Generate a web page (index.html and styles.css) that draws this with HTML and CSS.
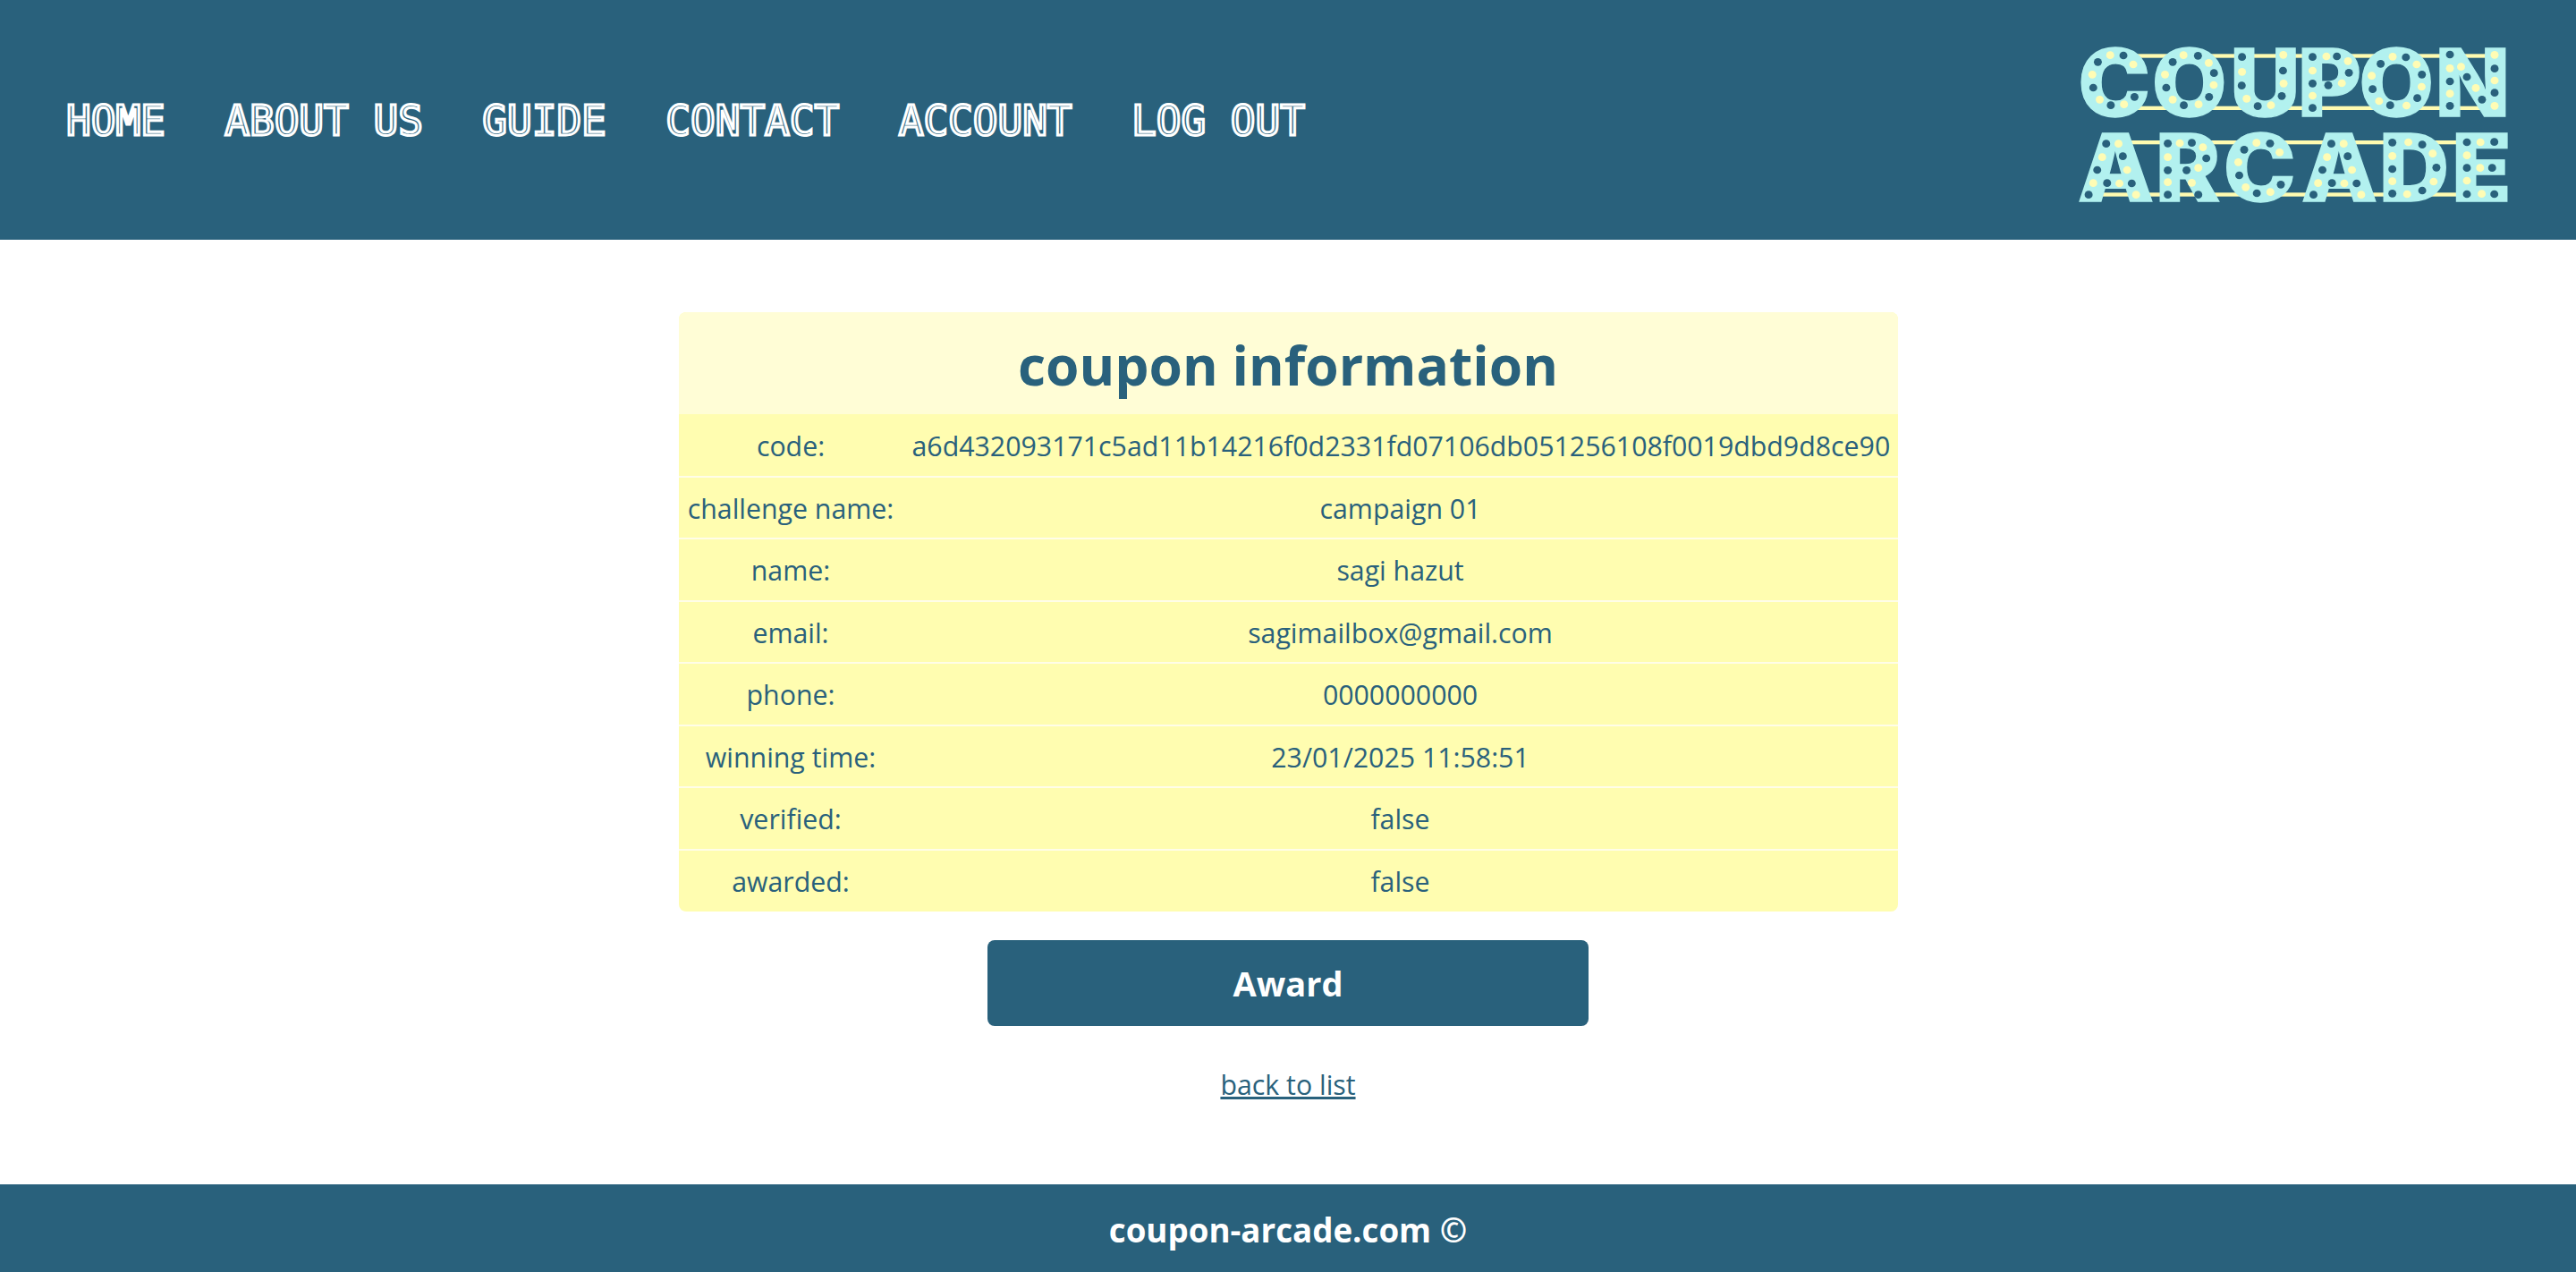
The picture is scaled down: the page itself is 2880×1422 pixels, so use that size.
FILE: index.html
```html
<!DOCTYPE html>
<html lang="en">
<head>
    <meta charset="UTF-8">
    <title>coupon information</title>
    <link rel="stylesheet" href="styles.css">
</head>
<body>
    <header class="top">
        <nav class="menu">
            <a href="#">HOME</a>
            <a href="#">ABOUT US</a>
            <a href="#">GUIDE</a>
            <a href="#">CONTACT</a>
            <a href="#">ACCOUNT</a>
            <a href="#">LOG OUT</a>
        </nav>
        <svg class="logo" viewBox="0 0 1568 660" preserveAspectRatio="none">
            <g class="rails">
                <rect x="310" y="91" width="1140" height="13"/>
                <rect x="310" y="266" width="1140" height="13"/>
                <rect x="290" y="381" width="1080" height="13"/>
                <rect x="195" y="556" width="1175" height="13"/>
            </g>
            <text class="logo-text" x="126 366 620 840 1038 1286" y="301">COUPON</text>
            <text class="logo-text" x="124 378 598 850 1104 1340" y="586">ARCADE</text>
            <g class="dark">
                <circle cx="273" cy="96" r="13"/><circle cx="190" cy="118" r="13"/><circle cx="175" cy="204" r="13"/><circle cx="232" cy="263" r="13"/><circle cx="309" cy="235" r="13"/>
                <circle cx="515" cy="97" r="13"/><circle cx="433" cy="118" r="13"/><circle cx="567" cy="155" r="13"/><circle cx="412" cy="204" r="13"/><circle cx="551" cy="235" r="13"/><circle cx="469" cy="263" r="13"/>
                <circle cx="658" cy="101" r="13"/><circle cx="791" cy="147" r="13"/><circle cx="657" cy="197" r="13"/><circle cx="787" cy="232" r="13"/><circle cx="709" cy="266" r="13"/>
                <circle cx="887" cy="101" r="13"/><circle cx="966" cy="99" r="13"/><circle cx="1005" cy="154" r="13"/><circle cx="887" cy="190" r="13"/><circle cx="938" cy="196" r="13"/><circle cx="887" cy="272" r="13"/>
                <circle cx="1190" cy="102" r="13"/><circle cx="1108" cy="124" r="13"/><circle cx="1242" cy="160" r="13"/><circle cx="1082" cy="209" r="13"/><circle cx="1227" cy="239" r="13"/><circle cx="1139" cy="263" r="13"/>
                <circle cx="1333" cy="93" r="13"/><circle cx="1478" cy="140" r="13"/><circle cx="1333" cy="183" r="13"/><circle cx="1388" cy="168" r="13"/><circle cx="1478" cy="221" r="13"/><circle cx="1437" cy="244" r="13"/><circle cx="1333" cy="265" r="13"/>
                <circle cx="217" cy="392" r="13"/><circle cx="271" cy="434" r="13"/><circle cx="188" cy="480" r="13"/><circle cx="220" cy="524" r="13"/><circle cx="300" cy="525" r="13"/><circle cx="160" cy="563" r="13"/>
                <circle cx="417" cy="391" r="13"/><circle cx="495" cy="389" r="13"/><circle cx="542" cy="441" r="13"/><circle cx="417" cy="481" r="13"/><circle cx="478" cy="481" r="13"/><circle cx="417" cy="563" r="13"/><circle cx="516" cy="563" r="13"/>
                <circle cx="749" cy="391" r="13"/><circle cx="665" cy="412" r="13"/><circle cx="649" cy="498" r="13"/><circle cx="706" cy="558" r="13"/><circle cx="784" cy="529" r="13"/>
                <circle cx="948" cy="392" r="13"/><circle cx="1001" cy="434" r="13"/><circle cx="919" cy="480" r="13"/><circle cx="950" cy="524" r="13"/><circle cx="1030" cy="525" r="13"/><circle cx="890" cy="563" r="13"/>
                <circle cx="1146" cy="388" r="13"/><circle cx="1243" cy="395" r="13"/><circle cx="1146" cy="477" r="13"/><circle cx="1289" cy="472" r="13"/><circle cx="1146" cy="559" r="13"/><circle cx="1243" cy="549" r="13"/>
                <circle cx="1388" cy="387" r="13"/><circle cx="1477" cy="386" r="13"/><circle cx="1388" cy="473" r="13"/><circle cx="1470" cy="473" r="13"/><circle cx="1388" cy="561" r="13"/><circle cx="1477" cy="561" r="13"/>
            </g>
            <g class="lit">
                <circle cx="230" cy="95" r="13"/><circle cx="305" cy="126" r="13"/><circle cx="172" cy="160" r="13"/><circle cx="196" cy="244" r="13"/><circle cx="275" cy="260" r="13"/>
                <circle cx="468" cy="95" r="13"/><circle cx="550" cy="121" r="13"/><circle cx="408" cy="160" r="13"/><circle cx="566" cy="195" r="13"/><circle cx="433" cy="244" r="13"/><circle cx="517" cy="260" r="13"/>
                <circle cx="792" cy="94" r="13"/><circle cx="658" cy="151" r="13"/><circle cx="793" cy="190" r="13"/><circle cx="673" cy="241" r="13"/><circle cx="752" cy="263" r="13"/>
                <circle cx="932" cy="99" r="13"/><circle cx="1002" cy="115" r="13"/><circle cx="887" cy="147" r="13"/><circle cx="982" cy="189" r="13"/><circle cx="887" cy="231" r="13"/>
                <circle cx="1147" cy="100" r="13"/><circle cx="1225" cy="126" r="13"/><circle cx="1079" cy="164" r="13"/><circle cx="1241" cy="201" r="13"/><circle cx="1103" cy="249" r="13"/><circle cx="1192" cy="264" r="13"/>
                <circle cx="1478" cy="94" r="13"/><circle cx="1333" cy="139" r="13"/><circle cx="1369" cy="134" r="13"/><circle cx="1478" cy="180" r="13"/><circle cx="1417" cy="205" r="13"/><circle cx="1333" cy="224" r="13"/><circle cx="1478" cy="265" r="13"/>
                <circle cx="257" cy="392" r="13"/><circle cx="204" cy="437" r="13"/><circle cx="285" cy="480" r="13"/><circle cx="175" cy="524" r="13"/><circle cx="260" cy="525" r="13"/><circle cx="314" cy="563" r="13"/>
                <circle cx="456" cy="390" r="13"/><circle cx="531" cy="404" r="13"/><circle cx="417" cy="437" r="13"/><circle cx="516" cy="473" r="13"/><circle cx="417" cy="521" r="13"/><circle cx="495" cy="523" r="13"/>
                <circle cx="705" cy="389" r="13"/><circle cx="780" cy="421" r="13"/><circle cx="646" cy="454" r="13"/><circle cx="670" cy="538" r="13"/><circle cx="750" cy="554" r="13"/>
                <circle cx="988" cy="392" r="13"/><circle cx="934" cy="437" r="13"/><circle cx="1015" cy="480" r="13"/><circle cx="905" cy="524" r="13"/><circle cx="990" cy="525" r="13"/><circle cx="1045" cy="563" r="13"/>
                <circle cx="1198" cy="387" r="13"/><circle cx="1277" cy="425" r="13"/><circle cx="1146" cy="433" r="13"/><circle cx="1146" cy="518" r="13"/><circle cx="1280" cy="519" r="13"/><circle cx="1194" cy="561" r="13"/>
                <circle cx="1432" cy="387" r="13"/><circle cx="1388" cy="431" r="13"/><circle cx="1431" cy="473" r="13"/><circle cx="1388" cy="516" r="13"/><circle cx="1436" cy="560" r="13"/>
            </g>
        </svg>
    </header>

    <main class="content">
        <div class="card">
            <h1 class="card-title">coupon information</h1>
            <table class="info">
                <tr><td class="label">code:</td><td>a6d432093171c5ad11b14216f0d2331fd07106db051256108f0019dbd9d8ce90</td></tr>
                <tr><td class="label">challenge name:</td><td>campaign 01</td></tr>
                <tr><td class="label">name:</td><td>sagi hazut</td></tr>
                <tr><td class="label">email:</td><td>sagimailbox@gmail.com</td></tr>
                <tr><td class="label">phone:</td><td>0000000000</td></tr>
                <tr><td class="label">winning time:</td><td>23/01/2025 11:58:51</td></tr>
                <tr><td class="label">verified:</td><td>false</td></tr>
                <tr><td class="label">awarded:</td><td>false</td></tr>
            </table>
        </div>
        <button class="award" type="button">Award</button>
        <a class="back" href="#">back to list</a>
    </main>

    <footer class="bottom">coupon-arcade.com ©</footer>
</body>
</html>
```

FILE: styles.css
```css
*{
    margin: 0;
    padding: 0;
    box-sizing: border-box;
}

body{
    height: 100vh;
    display: flex;
    flex-direction: column;
    background-color: #ffffff;
    color: #29617c;
    font-family: 'Open Sans', 'Noto Sans', sans-serif;
    font-size: 30.3px;
}

.top{
    height: 268px;
    display: flex;
    align-items: center;
    justify-content: space-between;
    padding: 0 60px 0 74px;
    background-color: #29617c;
}

.menu{
    display: flex;
    gap: 66.5px;
    padding-top: 2px;
}

.menu a{
    color: #29617c;
    font-family: 'DejaVu Sans Mono', monospace;
    font-size: 46px;
    line-height: 60px;
    text-decoration: none;
    -webkit-text-stroke: 3px #ffffff;
}

.logo{
    width: 540px;
    height: 220px;
    margin-top: 12px;
    overflow: visible;
}

.rails{
    fill: #fffbb0;
}

.logo-text{
    fill: #b2f1ef;
    stroke: #b2f1ef;
    stroke-width: 4px;
    font-family: 'Inter', 'Liberation Sans', sans-serif;
    font-size: 312px;
    font-weight: 900;
}

.dark{
    fill: #29617c;
}

.lit{
    fill: #fffcb5;
}

.content{
    flex: 1;
    display: flex;
    flex-direction: column;
    align-items: center;
    padding-top: 81px;
}

.card{
    width: 1363px;
    border-radius: 8px;
    overflow: hidden;
    background-color: #fffdb0;
}

.card-title{
    height: 114px;
    background-color: #fffdd6;
    font-size: 60.5px;
    line-height: 118px;
    text-align: center;
}

.info{
    width: 100%;
    border-collapse: collapse;
    table-layout: fixed;
}

.info td{
    height: 69.5px;
    padding: 2px 10px 0;
    border-bottom: 2px solid #fffde8;
    text-align: center;
    white-space: nowrap;
}

.info tr:last-child td{
    border-bottom: none;
}

.info .label{
    width: 251px;
}

.award{
    width: 672px;
    height: 96px;
    margin-top: 32px;
    border: none;
    border-radius: 8px;
    background-color: #29617c;
    color: #ffffff;
    font-family: inherit;
    font-size: 38px;
    font-weight: bold;
}

.back{
    margin-top: 40px;
    color: #29617c;
    line-height: 52px;
}

.bottom{
    height: 98px;
    display: flex;
    align-items: center;
    justify-content: center;
    padding-top: 4px;
    background-color: #29617c;
    color: #ffffff;
    font-size: 36.7px;
    font-weight: bold;
}
```
